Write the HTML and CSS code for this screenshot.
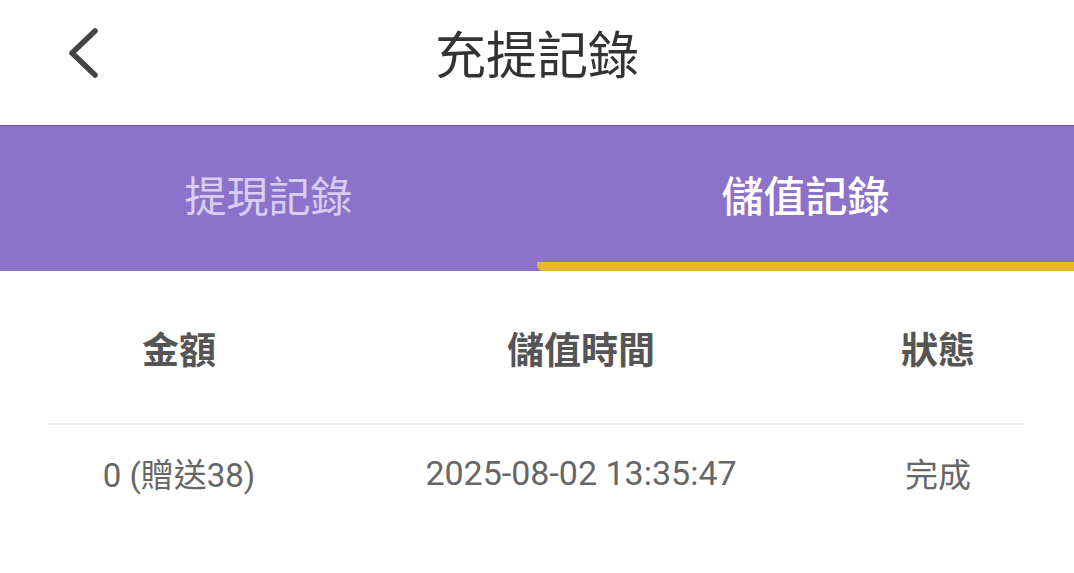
FILE: index.html
```html
<!DOCTYPE html>
<html lang="zh-Hant">
<head>
<meta charset="utf-8">
<link rel="stylesheet" href="styles.css">
</head>
<body>
<div class="app">
  <header class="topbar">
    <button class="back" aria-label="返回">
      <svg width="34" height="52" viewBox="0 0 34 52"><path d="M29 4 L6 26 L29 48" fill="none" stroke="#444" stroke-width="5.5" stroke-linecap="round" stroke-linejoin="round"/></svg>
    </button>
    <h1 class="title">充提記錄</h1>
  </header>
  <nav class="tabs">
    <div class="tab">提現記錄</div>
    <div class="tab active">儲值記錄</div>
  </nav>
  <section class="table">
    <div class="row head">
      <div class="cell">金額</div>
      <div class="cell">儲值時間</div>
      <div class="cell">狀態</div>
    </div>
    <div class="row item">
      <div class="cell">0 (贈送38)</div>
      <div class="cell">2025-08-02 13:35:47</div>
      <div class="cell">完成</div>
    </div>
  </section>
</div>
</body>
</html>
```

FILE: styles.css
```css
* { box-sizing: border-box; }
html, body { margin: 0; padding: 0; background: #fff; }
body {
  font-family: Roboto, "Noto Sans CJK TC", "Noto Sans", sans-serif;
  width: 1074px;
  height: 573px;
  overflow: hidden;
}
.topbar {
  position: relative;
  height: 125px;
  display: flex;
  align-items: center;
  justify-content: center;
}
.back {
  position: absolute;
  left: 66px;
  top: 27px;
  border: 0;
  background: none;
  padding: 0;
  display: flex;
}
.title {
  margin: 0 0 22px 0;
  font-size: 51px;
  font-weight: 400;
  color: #333;
  letter-spacing: 0;
}
.tabs {
  height: 146px;
  background: #8d72cc;
  display: flex;
  box-shadow: inset 0 2px 1px -1px rgba(60, 40, 90, 0.45);
}
.tab {
  flex: 1;
  display: flex;
  align-items: center;
  justify-content: center;
  padding-bottom: 0;
  font-size: 42px;
  color: #d9cdf1;
  font-weight: 400;
  border-bottom: 9px solid transparent;
}
.tab.active {
  color: #fff;
  font-weight: 500;
  border-bottom-color: #e8b72a;
  border-radius: 0 0 0 6px;
}
.table {
  padding: 0 50px 0 48px;
}
.row {
  display: grid;
  grid-template-columns: 262px 1fr 172px;
  text-align: center;
}
.head {
  height: 154px;
  align-items: center;
  font-size: 37px;
  font-weight: 700;
  color: #555;
  padding-top: 2px;
  border-bottom: 2px solid #eeeeee;
}
.item {
  height: 96px;
  align-items: center;
  font-size: 33px;
  color: #666;
}
.item .cell:nth-child(2) { font-size: 34px; }
```
